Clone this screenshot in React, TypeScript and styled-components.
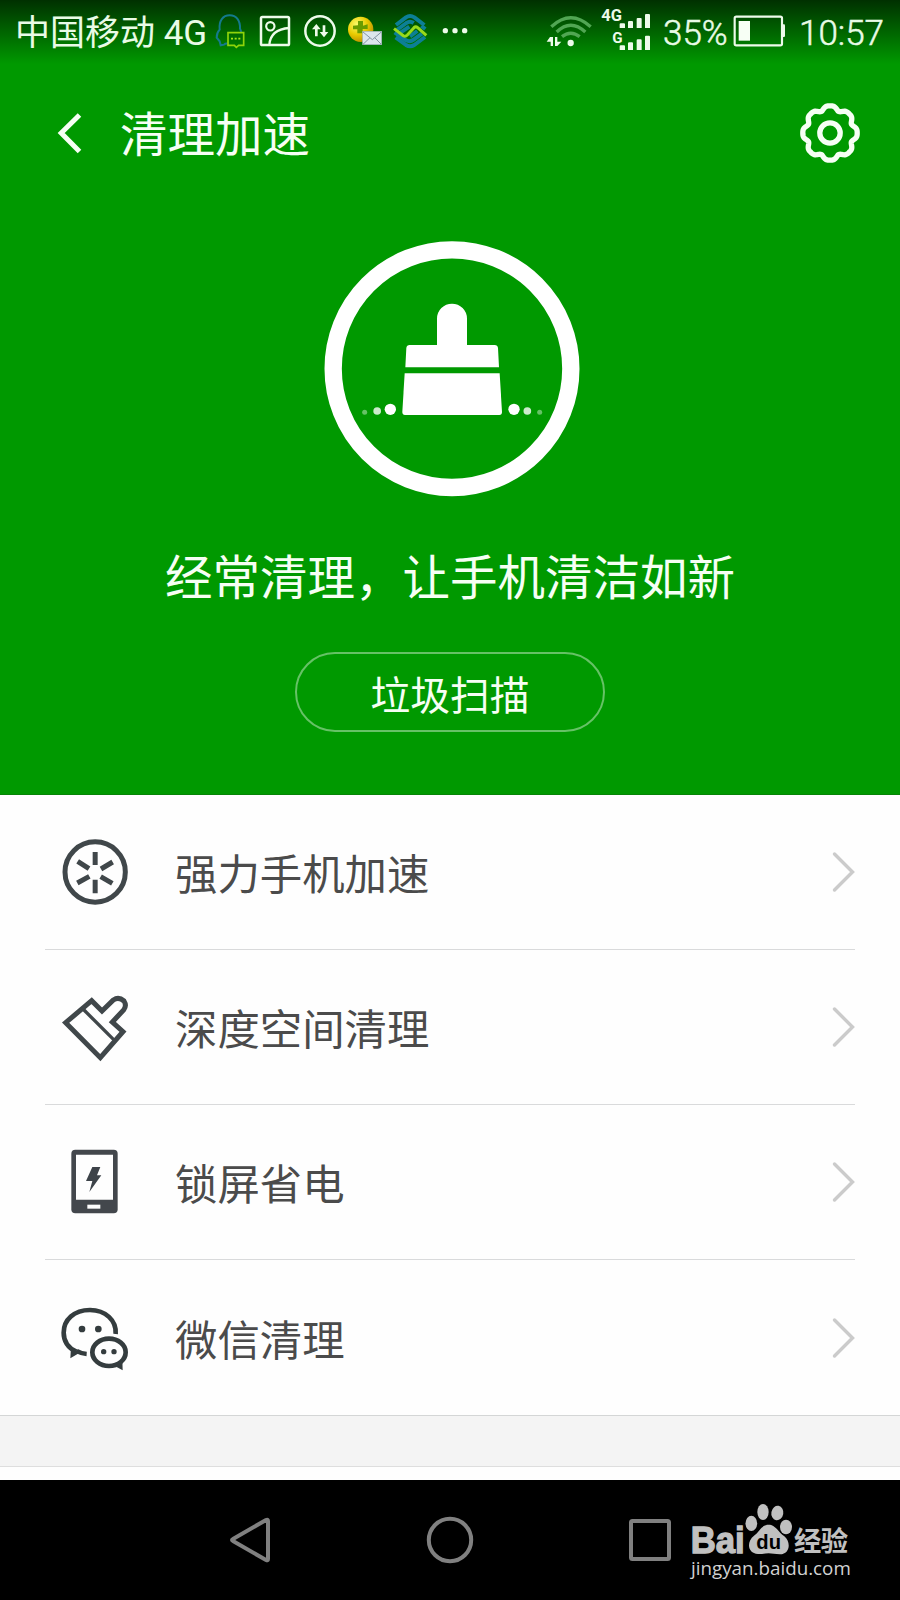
import React from "react";
import styled, { createGlobalStyle } from "styled-components";

const GlobalStyle = createGlobalStyle`
  body { margin: 0; background: #fff; }
  * { box-sizing: border-box; }
  svg { display: block; flex: none; overflow: visible; }
`;

const Screen = styled.div`
  position: relative;
  display: flex;
  flex-direction: column;
  width: 900px;
  height: 1600px;
  overflow: hidden;
  background: #fefefe;
  font-family: Roboto, "Noto Sans CJK SC", sans-serif;
`;

const Hero = styled.section`
  display: flex;
  flex-direction: column;
  align-items: center;
  height: 795px;
  color: #f6fff4;
  border-bottom: 1px solid #078407;
  background: linear-gradient(#003000 0, #003a00 6px, #009900 64px);
`;

const StatusBar = styled.header`
  display: flex;
  width: 100%;
  height: 70px;
  padding-left: 15px;
`;

const StatusText = styled.span<{ $width: number; $gap?: number; $light?: boolean }>`
  flex: none;
  width: ${(p) => p.$width}px;
  margin-left: ${(p) => p.$gap ?? 0}px;
  font-size: 35px;
  font-weight: ${(p) => (p.$light ? 300 : 400)};
  -webkit-text-stroke: ${(p) => (p.$light ? "0.5px #e9fbe6" : "0")};
  line-height: 67px;
  white-space: nowrap;
  color: #e9fbe6;
`;

const StatusSvg = styled.svg<{ $gap: number }>`
  margin-left: ${(p) => p.$gap}px;
`;

const TitleBar = styled.div`
  display: flex;
  align-items: center;
  width: 100%;
  height: 125px;
  padding: 0 38px 0 54px;
`;

const Title = styled.h1`
  flex: 1;
  margin: 0 0 0 36px;
  padding-top: 6px;
  font-size: 47.5px;
  font-weight: 400;
  line-height: 60px;
`;

const BrushSvg = styled.svg`
  margin-top: 35px;
`;

const Slogan = styled.p`
  margin: 34px 0 0;
  font-size: 47.5px;
  line-height: 70px;
  white-space: nowrap;
`;

const ScanButton = styled.button`
  width: 310px;
  height: 80px;
  margin-top: 38px;
  padding: 0;
  border: 2px solid #66c266;
  border-radius: 40px;
  background: transparent;
  color: inherit;
  font-family: inherit;
  font-size: 39.8px;
`;

const List = styled.ul`
  margin: 0;
  padding: 0 45px;
  list-style: none;
`;

const Row = styled.li`
  display: flex;
  align-items: center;
  height: 155px;
  padding-left: 15px;
  border-bottom: 1px solid #d9dadb;
  &:last-child { border-bottom: 0; }
`;

const RowLabel = styled.span`
  flex: 1;
  margin-left: 45px;
  padding-top: 8px;
  font-size: 42.4px;
  line-height: 60px;
  color: #4b4b4b;
`;

const Band = styled.div`
  height: 52px;
  border-top: 1px solid #d4d6d6;
  border-bottom: 1px solid #dedede;
  background: #f4f4f4;
`;

const NavBar = styled.nav`
  display: flex;
  align-items: center;
  justify-content: space-between;
  height: 120px;
  margin-top: auto;
  padding: 0 226px;
  background: #000;
`;

const Watermark = styled.div`
  position: absolute;
  left: 688px;
  top: 1500px;
  width: 166px;
`;

const Domain = styled.div`
  padding-left: 3px;
  font-family: "Open Sans", sans-serif;
  font-size: 18.8px;
  line-height: 25px;
  color: #d2d2d2;
`;

type StatusIconProps = { x: number; w: number; gap: number; children: React.ReactNode };

const StatusIcon = ({ x, w, gap, children }: StatusIconProps) => (
  <StatusSvg $gap={gap} width={w} height={70} viewBox={`${x} 0 ${w * 3} 210`} fill="none">
    {children}
  </StatusSvg>
);

const gearPath = (() => {
  const pts: string[] = [];
  for (let i = 0; i < 240; i++) {
    const a = (i / 240) * Math.PI * 2;
    const r = 25.7 + 2 * Math.cos(8 * a) - 0.5 * Math.cos(16 * a);
    pts.push(`${(32 + r * Math.cos(a)).toFixed(2)} ${(32 + r * Math.sin(a)).toFixed(2)}`);
  }
  return `M${pts.join("L")}Z`;
})();

const RowSvg = ({ box, children }: { box: string; children: React.ReactNode }) => (
  <svg width="70" height="70" viewBox={box} fill="none" stroke="#40474a" strokeWidth="15">
    {children}
  </svg>
);

const BoostIcon = () => (
  <RowSvg box="90 52 210 210">
    <circle cx="195.500" cy="157" r="90.500" />
    <path d="M195.500 97v39M195.500 180v41M143 125l34 22M248 127l-35 21M142 190l36-20M247 191l-35-20" />
  </RowSvg>
);

const DeepIcon = () => (
  <RowSvg box="90 517 210 210">
    <path d="M185 543L107 609L211 714L279 636L247 607L281 571Q291 558 282 544Q266 530 250 541L216 574Z" strokeWidth="15" />
    <path d="M159 568L251 660" strokeWidth="10" />
  </RowSvg>
);

const PhoneIcon = () => (
  <RowSvg box="90 52 210 210">
    <g stroke="none">
      <rect x="124" y="60" width="139" height="191" rx="12" fill="#43474c" />
      <path d="M138 75H249V210H138Z" fill="#fefefe" />
      <rect x="172" y="225" width="39" height="12" fill="#fefefe" />
      <path d="M187 112H211L201 137H214L178 187L187 154H168Z" fill="#3d4349" />
    </g>
  </RowSvg>
);

const ChatIcon = () => (
  <RowSvg box="90 517 210 210">
    <g stroke="#343c3e" strokeWidth="14">
      <path d="M170 670Q155 669 140 661M257 610C260 569 226 538 180 538C132 538 101 568 101 606C101 633 114 651 139 663" />
      <ellipse cx="237" cy="665" rx="50" ry="41" />
    </g>
    <g fill="#343c3e" stroke="none">
      <path d="M123 650L121 683L149 666ZM253 705L278 719L277 686Z" />
      <circle cx="156" cy="595" r="10" />
      <circle cx="205" cy="595" r="10" />
      <circle cx="221" cy="663" r="8" />
      <circle cx="252" cy="663" r="8" />
    </g>
  </RowSvg>
);

const rows = [
  { label: "强力手机加速", Icon: BoostIcon },
  { label: "深度空间清理", Icon: DeepIcon },
  { label: "锁屏省电", Icon: PhoneIcon },
  { label: "微信清理", Icon: ChatIcon },
];

const Chevron = () => (
  <svg width="24" height="44" viewBox="0 0 24 44" fill="none" stroke="#cbcbcb" strokeWidth="3.400">
    <path d="M3.500 4L21.500 22L3.500 40" strokeLinecap="round" />
  </svg>
);

const PhoneStatus = () => (
  <StatusBar>
    <StatusText $width={191}>中国移动 4G</StatusText>
    <StatusIcon x={42} w={32} gap={8}>
      <path d="M83 131Q76 130 72 134L62 136L59 124L50 113Q50 98 59 89C56 62 69 46 89 46C109 46 121 61 120 86L124 96" stroke="#147a8c" strokeWidth="6" />
      <path d="M84 98H131V136H116L109 142L103 136H84Z" stroke="#8fd40a" strokeWidth="5" />
      <path d="M93 116h6M104 116h6M115 116h6" stroke="#a5e315" strokeWidth="5" />
    </StatusIcon>
    <StatusIcon x={174} w={34} gap={12}>
      <rect x="183" y="51" width="84" height="84" rx="4" stroke="#edfbea" strokeWidth="7.500" />
      <circle cx="211" cy="79" r="12.500" stroke="#edfbea" strokeWidth="6.500" />
      <path d="M208 135Q211 88 268 84" stroke="#edfbea" strokeWidth="7" />
    </StatusIcon>
    <StatusIcon x={309} w={34} gap={11}>
      <circle cx="360" cy="93" r="44" stroke="#edfbea" strokeWidth="7.500" />
      <path d="M349 109V83M372 76V102" stroke="#edfbea" strokeWidth="8" />
      <path d="M349 72L362 88H336ZM372 112L359 96H385Z" fill="#edfbea" />
    </StatusIcon>
    <StatusIcon x={438} w={38} gap={9}>
      <defs>
        <radialGradient id="coin" cx=".35" cy=".3" r=".75">
          <stop offset="0" stopColor="#f8fb6a" />
          <stop offset=".55" stopColor="#e9cb00" />
          <stop offset="1" stopColor="#b98b00" />
        </radialGradient>
      </defs>
      <circle cx="482" cy="88" r="38" fill="url(#coin)" />
      <path d="M474 63H489V77L503 73V87H488V100H472V88H459V77L474 76Z" fill="#6a9c00" />
      <rect x="488" y="94" width="57" height="40" fill="#dce6ec" stroke="#a2b3bc" strokeWidth="2" />
      <path d="M489 96L517 119L544 96M489 133L510 113M544 133L524 113" stroke="#8395a1" strokeWidth="3" />
    </StatusIcon>
    <StatusIcon x={576} w={36} gap={8}>
      <g stroke="#0c7f96" strokeWidth="12" strokeLinejoin="round">
        <path d="M588 75L618 52Q630 44 643 52L673 75" />
        <path d="M586 93L619 69Q630 62 641 69M664 78L676 87" />
        <path d="M601 98L628 80" />
        <path d="M587 112L618 135Q630 143 643 135L675 111" />
        <path d="M584 97L618 121Q630 127 641 119L666 101" />
        <path d="M630 109L652 93" />
      </g>
      <path d="M582 86L610 107Q616 111 622 105L642 83Q647 78 653 83L679 106" stroke="#99d91b" strokeWidth="9" />
    </StatusIcon>
    <StatusIcon x={720} w={30} gap={12}>
      <g fill="#edfbea">
        <circle cx="736" cy="92" r="8" />
        <circle cx="765" cy="92" r="8" />
        <circle cx="794" cy="92" r="8" />
      </g>
    </StatusIcon>
    <StatusIcon x={45} w={48} gap={75}>
      <g stroke="#51a653" strokeWidth="10">
        <path d="M64 80Q122 26 182 80" />
        <path d="M80 96Q122 55 166 96" />
        <path d="M96 110Q122 89 149 110" />
      </g>
      <g fill="#edfbea">
        <circle cx="122" cy="129" r="9.500" />
        <path d="M50 125L60 111H69V138H62V125ZM94 125L82 138H75V111H82V125Z" />
      </g>
    </StatusIcon>
    <StatusIcon x={210} w={51} gap={7}>
      <g fill="#edfbea" fontFamily="Roboto, sans-serif" fontWeight="700">
        <text x="214" y="64" fontSize="47" textLength="62" lengthAdjust="spacingAndGlyphs">4G</text>
        <text x="247" y="129" fontSize="45" textLength="31" lengthAdjust="spacingAndGlyphs">G</text>
        <path d="M272 70h10q3 0 3 3v11h-16V73q0-3 3-3ZM298 63h8q3 0 3 3v18h-15V66q0-3 4-3ZM323 54h9q3 0 3 3v27h-15V57q0-3 3-3ZM348 42h9q3 0 3 3v39h-15V45q0-3 3-3Z" />
        <path d="M272 136h10q3 0 3 3v11h-16v-11q0-3 3-3ZM298 127h8q3 0 3 3v20h-15v-20q0-3 4-3ZM323 118h9q3 0 3 3v29h-15v-29q0-3 3-3ZM348 107h9q3 0 3 3v40h-15v-40q0-3 3-3Z" />
      </g>
    </StatusIcon>
    <StatusText $width={66} $gap={12} $light>35%</StatusText>
    <StatusIcon x={609} w={54} gap={4}>
      <rect x="614" y="50" width="142" height="86" rx="5" stroke="#edfbea" strokeWidth="6.500" />
      <rect x="626" y="63" width="34" height="59" fill="#f7fff5" />
      <path d="M757 73h5q3 0 3 4v30q0 4-3 4h-5Z" fill="#edfbea" />
    </StatusIcon>
    <StatusText $width={90} $gap={12} $light>10:57</StatusText>
  </StatusBar>
);

export default function App() {
  return (
    <Screen>
      <GlobalStyle />
      <Hero>
        <PhoneStatus />
        <TitleBar>
          <svg width="30" height="44" viewBox="0 0 30 44" fill="none" stroke="#f6fff4" strokeWidth="5">
            <path d="M25.500 4L7.200 22L25.500 40.500" />
          </svg>
          <Title>清理加速</Title>
          <svg width="64" height="64" viewBox="0 0 64 64" fill="none" stroke="#f6fff4" strokeWidth="5.300">
            <path d={gearPath} />
            <circle cx="32" cy="32" r="10.200" />
          </svg>
        </TitleBar>
        <BrushSvg width="280" height="280" viewBox="0 0 840 840" fill="#fff">
          <circle cx="426" cy="416" r="356.500" fill="none" stroke="#fff" strokeWidth="52" />
          <path d="M381 345V266A45 45 0 0 1 471 266V345H554Q563 345 564 354L567 412H286L289 354Q290 345 299 345Z" />
          <path d="M284 430H569L576 546Q576 555 568 555H285Q277 555 277 546Z" />
          <circle cx="241" cy="538" r="17" />
          <circle cx="612" cy="538" r="17" />
          <g opacity=".8">
            <circle cx="201.500" cy="543" r="11.500" />
            <circle cx="652" cy="543" r="11.500" />
          </g>
          <g opacity=".4">
            <circle cx="164" cy="547" r="7.500" />
            <circle cx="689" cy="547" r="7.500" />
          </g>
        </BrushSvg>
        <Slogan>经常清理，让手机清洁如新</Slogan>
        <ScanButton>垃圾扫描</ScanButton>
      </Hero>
      <List>
        {rows.map(({ label, Icon }) => (
          <Row key={label}>
            <Icon />
            <RowLabel>{label}</RowLabel>
            <Chevron />
          </Row>
        ))}
      </List>
      <Band />
      <NavBar>
        <svg width="48" height="48" viewBox="0 0 48 48" fill="none" stroke="#808080" strokeWidth="4">
          <path d="M42 5V43Q42 45 40 44L7 25Q5 24 7 23L40 4Q42 3 42 5Z" />
        </svg>
        <svg width="48" height="48" viewBox="0 0 48 48" fill="none" stroke="#808080" strokeWidth="4">
          <circle cx="24" cy="24" r="21.200" />
        </svg>
        <svg width="48" height="48" viewBox="0 0 48 48" fill="none" stroke="#808080" strokeWidth="4">
          <rect x="5" y="5" width="38" height="38" rx="1.500" />
        </svg>
      </NavBar>
      <Watermark>
        <svg width="166" height="56" viewBox="264 300 498 168" fill="#c0c0c0">
          <text x="272" y="458" fontFamily="Liberation Sans, Arial, sans-serif" fontWeight="700" fontSize="108" textLength="162" lengthAdjust="spacingAndGlyphs" stroke="#c0c0c0" strokeWidth="4">Bai</text>
          <ellipse cx="454" cy="370" rx="17.500" ry="23" />
          <ellipse cx="489" cy="336" rx="17" ry="24" />
          <ellipse cx="532" cy="339" rx="18" ry="22" transform="rotate(10 532 339)" />
          <ellipse cx="558" cy="381" rx="18" ry="22" />
          <path d="M506 374C527 374 536 397 553 409C574 426 570 463 540 463C526 463 516 460 506 460C496 460 486 463 474 462C442 460 439 425 462 407C478 396 484 374 506 374Z" />
          <text x="469" y="446" fontFamily="Liberation Sans, Arial, sans-serif" fontWeight="700" fontSize="62" textLength="74" lengthAdjust="spacingAndGlyphs" fill="#000">du</text>
          <text x="582" y="452" fontFamily="Noto Sans CJK SC, sans-serif" fontWeight="700" fontSize="82" textLength="162">经验</text>
        </svg>
        <Domain>jingyan.baidu.com</Domain>
      </Watermark>
    </Screen>
  );
}
